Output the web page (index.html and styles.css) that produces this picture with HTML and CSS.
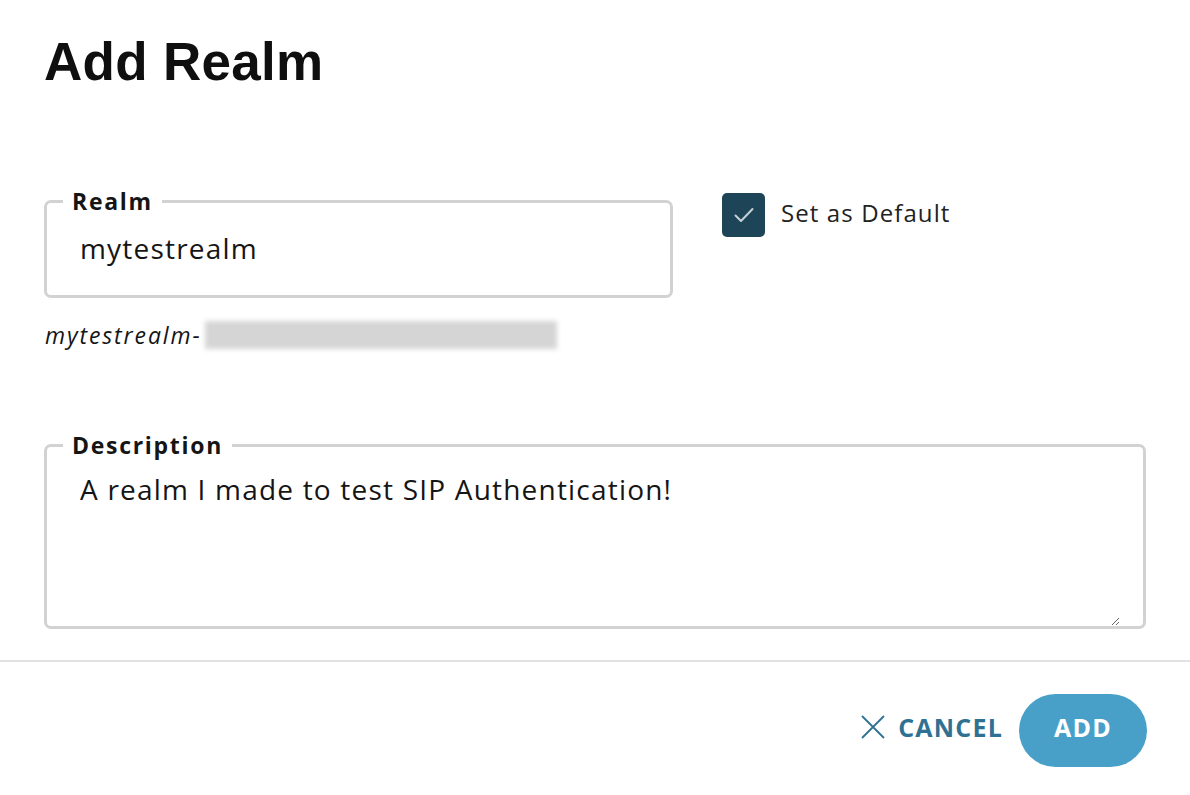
FILE: index.html
```html
<!DOCTYPE html>
<html lang="en">
<head>
<meta charset="utf-8">
<title>Add Realm</title>
<link rel="stylesheet" href="styles.css">
</head>
<body>
<div class="dialog">
  <div class="content">
    <h1 class="title">Add Realm</h1>
    <div class="row">
      <div class="realm-col">
        <fieldset class="field realm-field">
          <legend class="field-label">Realm</legend>
          <div class="field-value">mytestrealm</div>
        </fieldset>
        <div class="helper"><span class="helper-text">mytestrealm-</span><span class="blur"></span></div>
      </div>
      <label class="check">
        <span class="check-box">
          <svg width="26" height="26" viewBox="0 0 26 26"><path d="M4.5 13.5 L10 19 L21.5 7" fill="none" stroke="#c3d1d8" stroke-width="2" stroke-linecap="round" stroke-linejoin="round"/></svg>
        </span>
        <span class="check-label">Set as Default</span>
      </label>
    </div>
    <fieldset class="field desc-field">
      <legend class="field-label">Description</legend>
      <textarea class="desc-input">A realm I made to test SIP Authentication!</textarea>
    </fieldset>
  </div>
  <div class="divider"></div>
  <div class="footer">
    <button class="btn-cancel" type="button">
      <svg width="26" height="26" viewBox="0 0 26 26"><path d="M2 2 L24 24 M24 2 L2 24" stroke="#2f7192" stroke-width="1.8" fill="none"/></svg>
      <span>CANCEL</span>
    </button>
    <button class="btn-add" type="button">ADD</button>
  </div>
</div>
</body>
</html>
```

FILE: styles.css
```css
* { box-sizing: border-box; }
body {
  margin: 0;
  background: #fff;
  font-family: "Open Sans", "Liberation Sans", sans-serif;
  color: #151515;
}
.dialog { width: 1190px; }
.content { padding: 35px 44px 0 44px; }
.title {
  margin: 0;
  font-family: "Liberation Sans", Arial, sans-serif;
  font-weight: 700;
  font-size: 53px;
  line-height: 1;
  letter-spacing: 0.3px;
  color: #0f0f0f;
}
.row {
  display: flex;
  align-items: flex-start;
  margin-top: 101px;
}
.realm-col { width: 629px; }
.field {
  margin: 0;
  border: 3px solid #d2d2d2;
  border-radius: 7px;
  min-width: 0;
}
.field-label {
  margin-left: -17px;
  padding: 0 9px 0 9px;
  font-family: "Open Sans", sans-serif;
  font-weight: 700;
  font-size: 23px;
  line-height: 24px;
  letter-spacing: 1.7px;
  color: #151515;
}
.realm-field {
  padding: 17px 30px 29px 33px;
}
.field-value {
  font-size: 28px;
  line-height: 36px;
  letter-spacing: 1.2px;
}
.helper {
  display: flex;
  align-items: center;
  margin-top: 22px;
  height: 30px;
}
.helper-text {
  font-style: italic;
  font-size: 23px;
  letter-spacing: 1.9px;
  margin-left: 1px;
}
.blur {
  display: inline-block;
  width: 352px;
  height: 28px;
  margin-left: 3px;
  background: #d5d5d5;
  filter: blur(2.5px);
}
.check {
  display: flex;
  align-items: center;
  margin-left: 49px;
  margin-top: 4px;
}
.check-box {
  width: 43px;
  height: 44px;
  border-radius: 5px;
  background: #1e4457;
  display: flex;
  align-items: center;
  justify-content: center;
}
.check-label {
  margin-left: 16px;
  margin-top: -5px;
  font-size: 24px;
  letter-spacing: 1.1px;
  color: #222;
}
.desc-field {
  margin-top: 83px;
  padding: 14px 23px 0 33px;
}
.desc-input {
  display: block;
  width: 100%;
  height: 155px;
  border: 0;
  padding: 0;
  margin: 0;
  outline: none;
  resize: vertical;
  font-family: "Open Sans", sans-serif;
  font-size: 28px;
  line-height: 36px;
  letter-spacing: 1.2px;
  color: #151515;
  background: transparent;
}
.divider {
  margin-top: 31px;
  height: 2px;
  background: #e2e2e2;
}
.footer {
  display: flex;
  justify-content: flex-end;
  align-items: center;
  padding: 32px 43px 0 0;
}
.btn-cancel {
  display: flex;
  align-items: center;
  border: 0;
  background: transparent;
  padding: 0;
  margin-right: 16px;
  margin-bottom: 8px;
  font-family: "Open Sans", sans-serif;
  font-weight: 700;
  font-size: 25px;
  letter-spacing: 1.2px;
  color: #2f7192;
}
.btn-cancel svg { margin-right: 12px; }
.btn-add {
  width: 128px;
  height: 73px;
  border: 0;
  border-radius: 37px;
  padding: 0 0 8px 0;
  background: #48a0c9;
  color: #fff;
  font-family: "Open Sans", sans-serif;
  font-weight: 700;
  font-size: 25px;
  letter-spacing: 1.2px;
}
```
